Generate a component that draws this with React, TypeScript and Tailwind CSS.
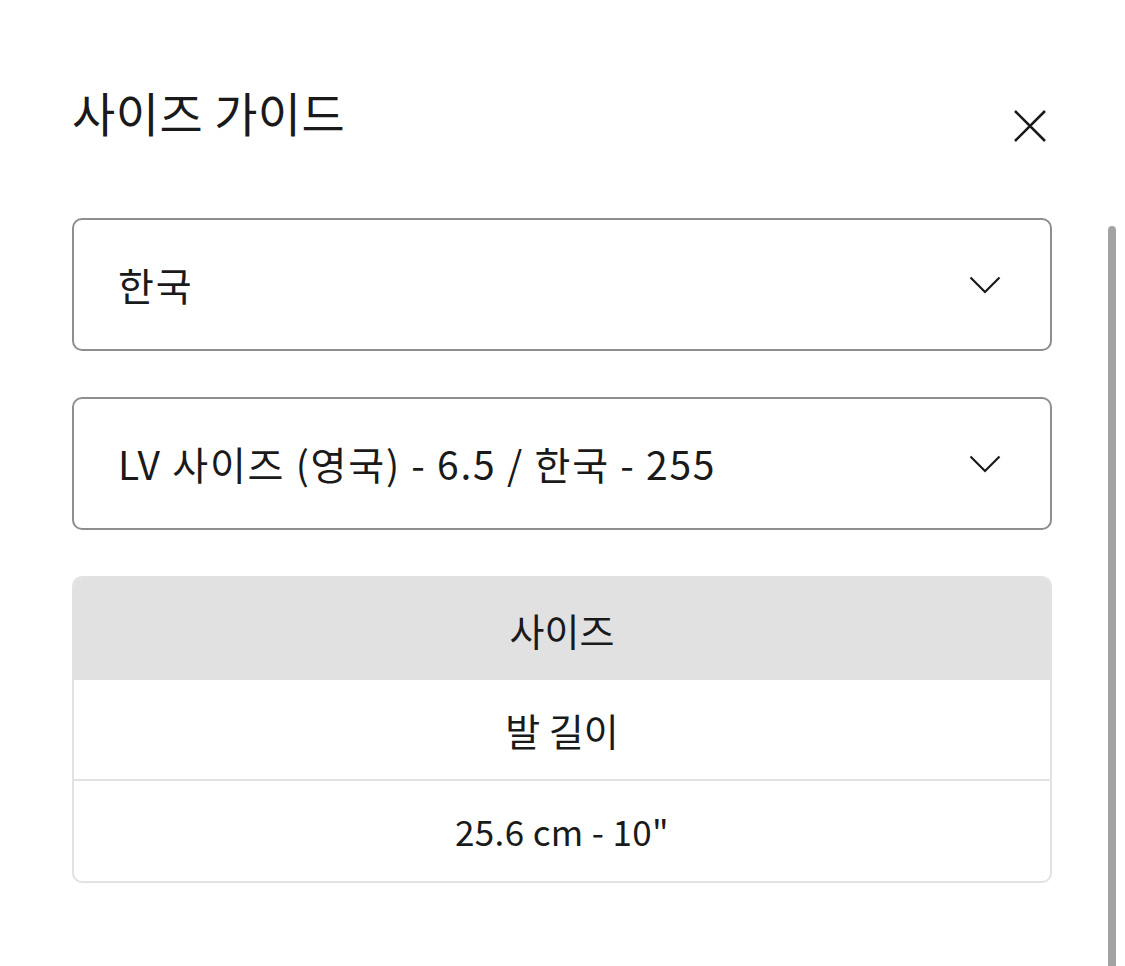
const font = { fontFamily: '"Noto Sans CJK KR", "Noto Sans", sans-serif' };

function Chevron() {
  return (
    <svg width="32" height="18" viewBox="0 0 32 18" fill="none" stroke="currentColor" strokeWidth="2.2" className="text-[#1a1a1a]">
      <path d="M1.5 1.5 L16 16 L30.5 1.5" />
    </svg>
  );
}

function Select({ value }: { value: string }) {
  return (
    <button
      type="button"
      className="flex h-[133px] w-full items-center justify-between rounded-[10px] border-2 border-[#8e8e8e] bg-white pl-[44px] pr-[49px] text-left"
    >
      <span className="text-[39px] leading-none tracking-[0.045em] text-[#1a1a1a]">{value}</span>
      <Chevron />
    </button>
  );
}

export default function App() {
  return (
    <div className="relative h-[966px] w-[1125px] overflow-hidden bg-white" style={font}>
      <div className="pl-[72px] pr-[73px]">
        <div className="flex items-start justify-between pt-[80px]">
          <h1 className="text-[47px] leading-[64px] tracking-[0.01em] font-normal text-[#1a1a1a]">사이즈 가이드</h1>
          <button type="button" className="mr-[4px] mt-[28px] text-[#1a1a1a]" aria-label="닫기">
            <svg width="36" height="36" viewBox="0 0 36 36" fill="none" stroke="currentColor" strokeWidth="2.6">
              <path d="M3 3 L33 33 M33 3 L3 33" />
            </svg>
          </button>
        </div>

        <div className="mt-[74px] flex flex-col gap-[46px]">
          <Select value="한국" />
          <Select value="LV 사이즈 (영국) - 6.5 / 한국 - 255" />

          <div className="overflow-hidden rounded-[10px] border-2 border-[#e2e2e2]">
            <div className="flex h-[102px] items-center justify-center bg-[#e1e1e1] text-[38px] text-[#1a1a1a]">
              사이즈
            </div>
            <div className="flex h-[101px] items-center justify-center border-b-2 border-[#e2e2e2] text-[38px] text-[#1a1a1a]">
              발 길이
            </div>
            <div className="flex h-[100px] items-center justify-center text-[35px] tracking-[0.01em] text-[#1a1a1a]">
              25.6 cm - 10"
            </div>
          </div>
        </div>
      </div>

      {/* scroll indicator */}
      <div className="absolute left-[1108px] top-[226px] h-[760px] w-[8px] rounded-full bg-[#a3a3a3]" />
    </div>
  );
}
